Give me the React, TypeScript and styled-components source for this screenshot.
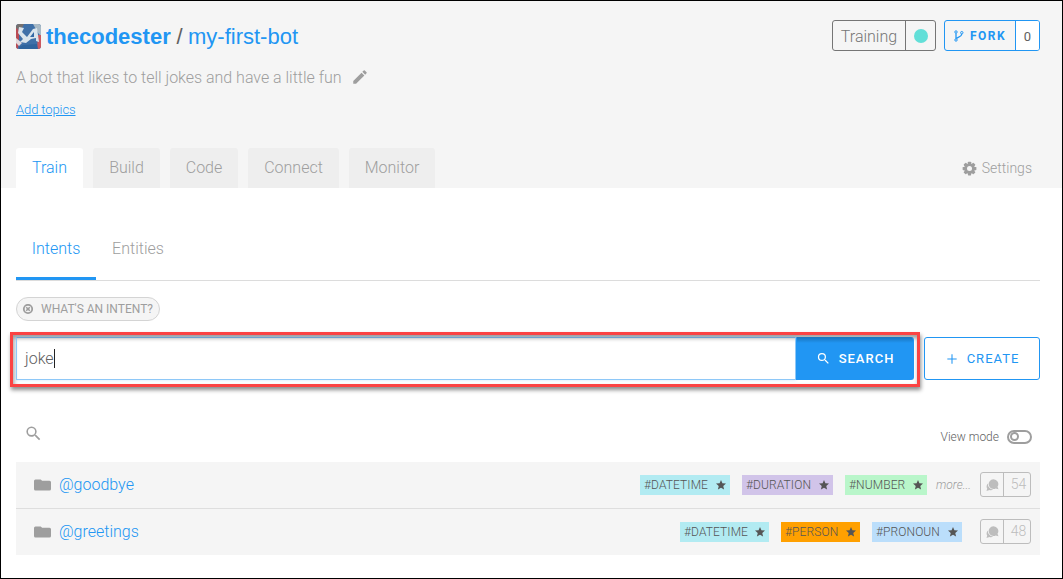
import React from 'react';
import styled, { createGlobalStyle } from 'styled-components';

const BLUE = '#2196f3';
const GREY = '#9e9e9e';

const GlobalStyle = createGlobalStyle`
  *, *::before, *::after { box-sizing: border-box; }
  body { margin: 0; background: #fff; font-family: Roboto, "Liberation Sans", sans-serif; font-weight: 300; }
  svg { display: block; flex: none; }
`;

const Frame = styled.div`
  width: 1063px;
  height: 579px;
  border: 1px solid #000;
  overflow: hidden;
  background: #fff;
  color: ${GREY};
  font-size: 16px;
`;

const Header = styled.header`
  height: 187px;
  padding: 0 22px 0 15px;
  background: #f5f5f5;
  display: flex;
  flex-direction: column;
`;

const TitleBar = styled.div`
  display: flex;
  justify-content: space-between;
  padding-top: 19px;
  height: 61px;
`;

const Title = styled.h1`
  margin: 0;
  height: 32px;
  display: flex;
  align-items: center;
  font-family: "Liberation Sans", Arial, sans-serif;
  font-size: 22px;
  line-height: 30px;
  font-weight: 400;
  color: #616161;
`;

const Owner = styled.a`
  margin-left: 5px;
  padding-top: 2px;
  width: 125px;
  color: ${BLUE};
  font-weight: 700;
  white-space: nowrap;
`;

const Slash = styled.span`
  width: 17px;
  padding-top: 2px;
  text-align: center;
`;

const BotName = styled.a`
  padding-top: 2px;
  color: ${BLUE};
`;

const HeaderActions = styled.div`
  display: flex;
  gap: 8px;
`;

const SplitButton = styled.div<{ $color: string; $width: number }>`
  display: flex;
  width: ${p => p.$width}px;
  height: 31px;
  border: 1px solid ${p => p.$color};
  border-radius: 3px;
  color: ${p => p.$color};
  overflow: hidden;
`;

const SplitMain = styled.div`
  flex: 1;
  display: flex;
  align-items: center;
  justify-content: center;
`;

const StatusLabel = styled.span`
  padding-top: 2px;
`;

const SplitSide = styled.div<{ $width: number; $white?: boolean }>`
  width: ${p => p.$width}px;
  border-left: 1px solid currentColor;
  background: ${p => (p.$white ? '#fff' : 'transparent')};
  display: flex;
  align-items: center;
  justify-content: center;
`;

const ForkLabel = styled.span`
  margin-left: 6px;
  font-size: 12px;
  font-weight: 700;
  letter-spacing: 1.5px;
`;

const ForkCount = styled.span`
  color: #616161;
  font-size: 13px;
  font-weight: 400;
  padding-top: 2px;
`;

const StatusDot = styled.span`
  width: 14px;
  height: 14px;
  border-radius: 50%;
  background: #62dfd8;
`;

const Description = styled.div`
  display: flex;
  align-items: center;
  gap: 9px;
  height: 30px;
  letter-spacing: -0.015px;
`;

const TopicsLink = styled.a`
  align-self: flex-start;
  margin-top: 9px;
  font-size: 13px;
  line-height: 18px;
  letter-spacing: -0.1px;
  color: ${BLUE};
  text-decoration: underline;
`;

const NavBar = styled.nav`
  margin-top: auto;
  height: 40px;
  display: flex;
  gap: 10px;
`;

const NavTab = styled.a<{ $active?: boolean; $width: number }>`
  width: ${p => p.$width}px;
  height: 40px;
  line-height: 39px;
  text-align: center;
  border-radius: 3px 3px 0 0;
  background: ${p => (p.$active ? '#fff' : '#eee')};
  color: ${p => (p.$active ? BLUE : GREY)};
`;

const SettingsLink = styled.a`
  margin-left: auto;
  padding-right: 8px;
  display: flex;
  align-items: center;
  gap: 5px;
  height: 40px;
  font-size: 14px;
`;

const Content = styled.main`
  padding: 32px 22px 0 15px;
`;

const SubTabs = styled.div`
  display: flex;
  height: 61px;
  border-bottom: 1px solid #dcdcdc;
`;

const SubTab = styled.a<{ $active?: boolean }>`
  height: 60px;
  width: ${p => (p.$active ? 80 : 84)}px;
  line-height: 57px;
  text-align: center;
  color: ${p => (p.$active ? BLUE : GREY)};
  border-bottom: ${p => (p.$active ? `3px solid ${BLUE}` : '0')};
`;

const HintChip = styled.div`
  margin-top: 16px;
  width: 144px;
  height: 24px;
  padding-left: 5px;
  border: 1px solid #d4d4d4;
  border-radius: 12px;
  background: #f5f5f5;
  display: flex;
  align-items: center;
  gap: 8px;
  font-size: 12px;
  font-weight: 400;
  white-space: nowrap;
`;

const SearchBar = styled.div`
  display: flex;
  margin: 11px 0 0 -6px;
  align-items: flex-start;
`;

const Highlight = styled.div`
  width: 910px;
  height: 55px;
  border: 3px solid #fb4343;
  padding: 2px 3px;
  display: flex;
  box-shadow: 1px 3px 4px rgba(0, 0, 0, 0.45), inset 1px 3px 4px rgba(0, 0, 0, 0.4);
`;

const SearchField = styled.div`
  flex: 1;
  height: 43px;
  border: 1px solid #8ec8f8;
  border-top-color: #6ba3d1;
  box-shadow: 0 0 3px rgba(33, 150, 243, 0.25);
  display: flex;
  align-items: center;
  padding-left: 8px;
  color: #616161;
`;

const Caret = styled.span`
  width: 1px;
  height: 19px;
  background: #222;
`;

const ActionButton = styled.button<{ $filled?: boolean; $width: number }>`
  width: ${p => p.$width}px;
  height: 43px;
  padding: 0;
  display: flex;
  align-items: center;
  justify-content: center;
  gap: 8px;
  border: 1px solid ${BLUE};
  border-radius: ${p => (p.$filled ? '0 3px 3px 0' : '3px')};
  background: ${p => (p.$filled ? `linear-gradient(#1a78c3, ${BLUE} 5px)` : '#fff')};
  border-top-color: ${p => (p.$filled ? '#1a78c3' : BLUE)};
  color: ${p => (p.$filled ? '#fff' : BLUE)};
  font: ${p => (p.$filled ? 500 : 400)} 13px Roboto, sans-serif;
  letter-spacing: 1px;
`;

const CreateSlot = styled.div`
  margin: 5px 0 0 4px;
`;

const ListTools = styled.div`
  height: 75px;
  padding: 0 8px;
  display: flex;
  align-items: center;
  justify-content: space-between;
`;

const ToolSearch = styled.div`
  padding-top: 17px;
`;

const ViewMode = styled.div`
  padding-top: 24px;
  display: flex;
  align-items: center;
  gap: 8px;
  font-size: 12px;
  color: #616161;
`;

const Toggle = styled.span`
  width: 25px;
  height: 14px;
  border: 2px solid ${GREY};
  border-radius: 8px;
  display: flex;
  align-items: center;
  &::before {
    content: '';
    width: 9px;
    height: 9px;
    margin-left: 1px;
    border: 2px solid ${GREY};
    border-radius: 50%;
  }
`;

const IntentRow = styled.div`
  height: 46px;
  padding: 0 9px 0 18px;
  background: #f5f5f5;
  display: flex;
  align-items: center;
  & + & { height: 47px; border-top: 1px solid #dedede; }
`;

const IntentName = styled.a`
  margin-left: 8px;
  margin-right: auto;
  padding-bottom: 1px;
  color: ${BLUE};
`;

const EntityTag = styled.span<{ $bg: string; $width: number }>`
  width: ${p => p.$width}px;
  height: 20px;
  margin-right: 12px;
  padding: 0 3px 0 4px;
  display: flex;
  align-items: center;
  justify-content: space-between;
  background: ${p => p.$bg};
  color: #555;
  font-size: 12px;
  font-weight: 300;
  letter-spacing: 0.1px;
  white-space: nowrap;
`;

const More = styled.span`
  width: 38px;
  margin-left: -3px;
  font-size: 12px;
  font-style: italic;
  white-space: nowrap;
`;

const Phrases = styled.div`
  display: flex;
  width: 51px;
  height: 25px;
  margin: 0 0 1px 6px;
  border: 1px solid #bdbdbd;
  border-radius: 3px;
  color: #bdbdbd;
  font-size: 14px;
`;

const PhraseIcon = styled.span`
  width: 23px;
  border-right: 1px solid #bdbdbd;
  display: flex;
  align-items: center;
  justify-content: center;
`;

const PhraseCount = styled.span`
  flex: 1;
  line-height: 23px;
  padding-left: 3px;
  text-align: center;
`;

const Avatar = () => (
  <svg width="25" height="25" viewBox="0 0 25 25">
    <defs>
      <clipPath id="avatar"><rect width="25" height="25" rx="3" /></clipPath>
    </defs>
    <g clipPath="url(#avatar)">
      <rect width="25" height="25" fill="#3f70a8" />
      <path d="M0 0h8l-3 6-5-1z" fill="#75706f" />
      <path d="M0 4l3 2v8l-1 11H0z" fill="#b94c55" />
      <path d="M17 0h8v12l-3-3z" fill="#a9bac6" />
      <path d="M22 11h3v14h-4z" fill="#cc5960" />
      <path d="M3 3l5 1-2 4 5 5 6-8 4-1 2 14-3-1v-3l-5 1-5 4-6-1 3-3-5-6z" fill="#d9e4ec" />
      <path d="M14 13l4-5v5z" fill="#3268a5" />
      <path d="M0 14l6 5-3 3-3-3z" fill="#e0d8dd" />
      <path d="M3 23l4-2 14-1 1 5H3z" fill="#2f649e" />
    </g>
  </svg>
);

const MaterialIcon = ({ d, size }: { d: string; size: number }) => (
  <svg width={size} height={size} viewBox="0 0 24 24" fill="currentColor"><path d={d} /></svg>
);

const PENCIL = 'M3 17.25V21h3.75L17.81 9.94l-3.75-3.75L3 17.25zM20.71 7.04a1 1 0 0 0 0-1.41l-2.34-2.34a1 1 0 0 0-1.41 0l-1.83 1.83 3.75 3.75 1.83-1.83z';
const SEARCH = 'M15.5 14h-.79l-.28-.27A6.47 6.47 0 0 0 16 9.5 6.5 6.5 0 1 0 9.5 16c1.61 0 3.09-.59 4.23-1.57l.27.28v.79l5 4.99L20.49 19l-4.99-5zm-6 0a4.5 4.5 0 1 1 0-9 4.5 4.5 0 0 1 0 9z';
const STAR = 'M12 17.27 18.18 21l-1.64-7.03L22 9.24l-7.19-.61L12 2 9.19 8.63 2 9.24l5.46 4.73L5.82 21z';
const PLUS = 'M20 12.9h-7.1V20h-1.8v-7.1H4v-1.8h7.1V4h1.8v7.1H20z';

const ForkIcon = () => (
  <svg width="10" height="12" viewBox="0 0 10 12" fill="none" stroke="currentColor" strokeWidth="1">
    <circle cx="2" cy="2" r="1.2" />
    <circle cx="7.8" cy="2.7" r="1.2" />
    <circle cx="2" cy="10" r="1.2" />
    <path d="M2 3.2v5.6M2.4 8.7C3 6.6 7.5 7.4 7.8 4" strokeWidth="1.3" />
  </svg>
);

const GearIcon = () => (
  <svg width="15" height="15" viewBox="0 0 24 24">
    <g fill={GREY}>
      {[0, 45, 90, 135].map(a => (
        <rect key={a} x="9.4" y="1" width="5.2" height="22" rx="1" transform={`rotate(${a} 12 12)`} />
      ))}
      <circle cx="12" cy="12" r="8.6" />
    </g>
    <circle cx="12" cy="12" r="4" fill="#f5f5f5" />
  </svg>
);

const CloseCircleIcon = () => (
  <svg width="11" height="11" viewBox="0 0 11 11">
    <circle cx="6" cy="5" r="4.2" fill="none" stroke={GREY} strokeWidth="1.8" />
    <path d="M4.2 3.2l3.6 3.6M7.8 3.2L4.2 6.8" stroke={GREY} strokeWidth="1.6" />
  </svg>
);

const FolderIcon = () => (
  <svg width="17" height="12" viewBox="0 0 17 12">
    <path d="M1.5.5h5.2l1.4 1.2h7.4A1.5 1.5 0 0 1 17 3.2V10a1.5 1.5 0 0 1-1.5 1.5h-14A1.5 1.5 0 0 1 0 10V2A1.5 1.5 0 0 1 1.5.5z" fill={GREY} />
  </svg>
);

const ChatIcon = () => (
  <svg width="13" height="12" viewBox="0 0 13 12" fill="#bdbdbd">
    <path d="M7.4.2a4.9 4.9 0 0 1 4.1 7.6l1 2.4-2.8-.7A4.9 4.9 0 1 1 7.4.2z" />
    <path d="M1.9 4.4a5.6 5.6 0 0 0 5.2 6.2c-.8.6-2.2 1-3.6.5L.5 12l.7-2.4C.2 8 .4 5.8 1.9 4.4z" />
  </svg>
);

type Tag = { name: string; bg: string; width: number };

const intents: { name: string; tags: Tag[]; more: boolean; count: number }[] = [
  {
    name: '@goodbye',
    tags: [
      { name: '#DATETIME', bg: '#b2ebf2', width: 90 },
      { name: '#DURATION', bg: '#d1c4e9', width: 91 },
      { name: '#NUMBER', bg: '#b9f6ca', width: 82 },
    ],
    more: true,
    count: 54,
  },
  {
    name: '@greetings',
    tags: [
      { name: '#DATETIME', bg: '#b2ebf2', width: 89 },
      { name: '#PERSON', bg: '#ffa000', width: 79 },
      { name: '#PRONOUN', bg: '#bbdefb', width: 90 },
    ],
    more: false,
    count: 48,
  },
];

const navTabs = [
  { name: 'Train', width: 67 },
  { name: 'Build', width: 67 },
  { name: 'Code', width: 68 },
  { name: 'Connect', width: 91 },
  { name: 'Monitor', width: 86 },
];

export default function App() {
  return (
    <>
      <GlobalStyle />
      <Frame>
        <Header>
          <TitleBar>
            <Title>
              <Avatar />
              <Owner>thecodester</Owner>
              <Slash>/</Slash>
              <BotName>my-first-bot</BotName>
            </Title>
            <HeaderActions>
              <SplitButton $color="#757575" $width={104}>
                <SplitMain><StatusLabel>Training</StatusLabel></SplitMain>
                <SplitSide $width={30}><StatusDot /></SplitSide>
              </SplitButton>
              <SplitButton $color={BLUE} $width={96}>
                <SplitMain>
                  <ForkIcon />
                  <ForkLabel>FORK</ForkLabel>
                </SplitMain>
                <SplitSide $width={24} $white><ForkCount>0</ForkCount></SplitSide>
              </SplitButton>
            </HeaderActions>
          </TitleBar>
          <Description>
            <span>A bot that likes to tell jokes and have a little fun</span>
            <MaterialIcon d={PENCIL} size={18} />
          </Description>
          <TopicsLink>Add topics</TopicsLink>
          <NavBar>
            {navTabs.map((t, i) => (
              <NavTab key={t.name} $active={i === 0} $width={t.width}>{t.name}</NavTab>
            ))}
            <SettingsLink><GearIcon />Settings</SettingsLink>
          </NavBar>
        </Header>
        <Content>
          <SubTabs>
            <SubTab $active>Intents</SubTab>
            <SubTab>Entities</SubTab>
          </SubTabs>
          <HintChip><CloseCircleIcon />WHAT'S AN INTENT?</HintChip>
          <SearchBar>
            <Highlight>
              <SearchField>joke<Caret /></SearchField>
              <ActionButton $filled $width={118}>
                <MaterialIcon d={SEARCH} size={15} />SEARCH
              </ActionButton>
            </Highlight>
            <CreateSlot>
              <ActionButton $width={116}>
                <MaterialIcon d={PLUS} size={14} />CREATE
              </ActionButton>
            </CreateSlot>
          </SearchBar>
          <ListTools>
            <ToolSearch><MaterialIcon d={SEARCH} size={19} /></ToolSearch>
            <ViewMode>View mode<Toggle /></ViewMode>
          </ListTools>
          {intents.map(intent => (
            <IntentRow key={intent.name}>
              <FolderIcon />
              <IntentName>{intent.name}</IntentName>
              {intent.tags.map(tag => (
                <EntityTag key={tag.name} $bg={tag.bg} $width={tag.width}>
                  {tag.name}
                  <MaterialIcon d={STAR} size={12} />
                </EntityTag>
              ))}
              {intent.more && <More>more...</More>}
              <Phrases>
                <PhraseIcon><ChatIcon /></PhraseIcon>
                <PhraseCount>{intent.count}</PhraseCount>
              </Phrases>
            </IntentRow>
          ))}
        </Content>
      </Frame>
    </>
  );
}
